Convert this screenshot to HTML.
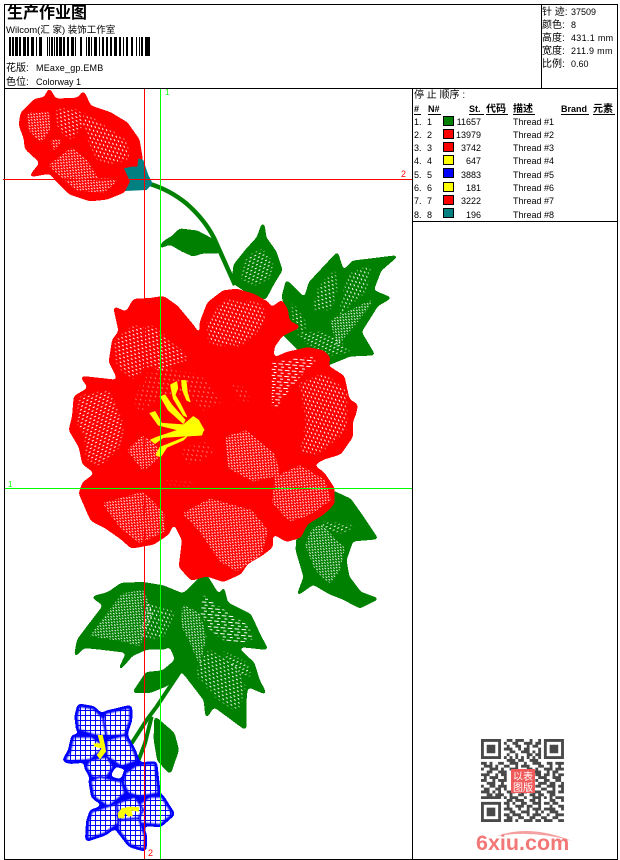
<!DOCTYPE html>
<html><head><meta charset="utf-8"><style>
html,body{margin:0;padding:0;background:#fff;width:620px;height:860px;overflow:hidden}
svg{display:block}
text{font-family:"Liberation Sans","WenQuanYi Zen Hei","Noto Sans CJK SC",sans-serif;font-size:9px;fill:#000}
.z{font-size:10px}
.b{font-weight:bold}
</style></head><body>
<svg width="620" height="860" viewBox="0 0 620 860" xmlns="http://www.w3.org/2000/svg">
<defs>
<pattern id="a" width="15" height="18" patternUnits="userSpaceOnUse" patternTransform="rotate(35)"><rect width="6" height="3" fill="#fff"/><rect x="7" y="9" width="6" height="3" fill="#fff"/></pattern>
<pattern id="b" width="15" height="18" patternUnits="userSpaceOnUse" patternTransform="rotate(65)"><rect width="6" height="3" fill="#fff"/><rect x="7" y="9" width="6" height="3" fill="#fff"/></pattern>
<pattern id="c" width="15" height="18" patternUnits="userSpaceOnUse" patternTransform="rotate(-25)"><rect width="6" height="3" fill="#fff"/><rect x="7" y="9" width="6" height="3" fill="#fff"/></pattern>
<pattern id="d" width="12" height="12" patternUnits="userSpaceOnUse" patternTransform="rotate(40)"><rect width="6" height="2.6" fill="#fff"/><rect x="5" y="6" width="6" height="2.6" fill="#fff"/></pattern>
<pattern id="e" width="21" height="18" patternUnits="userSpaceOnUse" patternTransform="rotate(5)"><rect width="14" height="3" fill="#fff"/><rect x="9" y="9" width="9" height="3" fill="#fff"/></pattern>
<pattern id="f" width="18" height="21" patternUnits="userSpaceOnUse" patternTransform="rotate(55)"><rect width="6" height="3" fill="#fff"/><rect x="9" y="10" width="6" height="3" fill="#fff"/></pattern>
<pattern id="l" width="15" height="15" patternUnits="userSpaceOnUse"><rect width="15" height="15" fill="#fff"/><path d="M0 1.5H15M1.5 0V15" stroke="#00f" stroke-width="3" fill="none"/></pattern>
<filter id="g" x="-10%" y="-10%" width="120%" height="120%"><feGaussianBlur stdDeviation="6.5"/><feComponentTransfer><feFuncA type="discrete" tableValues="0 1"/></feComponentTransfer></filter>
<filter id="g1" x="-10%" y="-10%" width="120%" height="120%"><feGaussianBlur stdDeviation="1.8"/><feComponentTransfer><feFuncA type="discrete" tableValues="0 1"/></feComponentTransfer></filter>
<filter id="h" x="-10%" y="-10%" width="120%" height="120%"><feGaussianBlur in="SourceAlpha" stdDeviation="9"/><feComponentTransfer result="m"><feFuncA type="linear" slope="20" intercept="-1.4"/></feComponentTransfer><feComposite in="SourceGraphic" in2="m" operator="in"/></filter>
<filter id="s" x="-10%" y="-10%" width="120%" height="120%"><feGaussianBlur stdDeviation="2"/></filter>
<filter id="q" x="-5%" y="-5%" width="110%" height="110%"><feGaussianBlur stdDeviation=".12"/></filter>
<g id="petals">
<polygon points="88,408 130,415 165,450 170,500 130,495 85,480 80,440"/>
<polygon points="165,430 240,412 240,450 225,495 170,500 160,450"/>
<polygon points="70,500 125,500 165,530 120,570 60,575 44,570 60,545"/>
<polygon points="170,510 225,495 250,540 262,572 215,590 170,560"/>
<polygon points="120,570 170,560 190,590 165,630 125,620 108,590"/>
<polygon points="122,632 150,620 215,635 225,670 175,710 130,680"/>
<polygon points="225,610 260,585 315,580 325,670 270,680 235,670 220,640"/>
<polygon points="300,680 335,680 368,732 330,765 270,760 255,710"/>
<polygon points="125,725 200,700 205,760 165,790 112,808 115,755"/>
<polygon points="205,750 265,740 285,800 283,838 240,825 205,780"/>
<polygon points="200,700 255,680 280,720 265,745 205,750"/>
</g>
<mask id="bm" maskUnits="userSpaceOnUse" x="0" y="380" width="420" height="480"><g filter="url(#s)" fill="#fff" stroke="#000" stroke-width="9"><use href="#petals"/></g></mask>
</defs>

<!-- stems and top leaves -->
<path d="M150 184Q170 190 187 204Q205 220 214 238L235 285" fill="none" stroke="#008000" stroke-width="4.5"/>
<g filter="url(#g1)" fill="#008000" stroke="#008000" stroke-width="3">
<polygon points="160,247 166,241 173,237 180,230 197,232 212,240 218,252 203,252 193,255 182,250 170,243"/>
<polygon points="263,224 265,238 275,252 281,270 273,283 265,298 250,293 233,282 235,265 247,250 258,238"/>
<polygon points="287,282 305,300 310,283 337,254 343,273 353,262 395,257 380,270 372,291 389,298 377,305 360,332 373,354 350,355 328,364 300,350 283,333 290,317 283,297"/>
<polygon points="333,492 350,500 362,517 376,538 352,540 345,560 348,577 360,593 376,599 360,607 343,598 330,593 313,583 299,593 305,577 297,550 298,537 313,510"/>
</g>
<g transform="scale(.3333)">
<g filter="url(#h)">
<polygon fill="url(#c)" points="735,771 789,741 825,789 816,834 771,861 720,840"/>
<polygon fill="url(#a)" points="951,861 1005,801 1020,849 999,930 930,939"/>
<polygon fill="url(#b)" points="1041,819 1119,789 1101,879 1011,951"/>
<polygon fill="url(#d)" points="990,960 1131,891 1071,969 1011,1041"/>
<polygon fill="url(#c)" points="870,999 969,990 1071,1059 981,1071"/>
<polygon fill="url(#a)" points="870,891 921,960 921,990 870,990"/>
<polygon fill="url(#d)" points="936,1584 966,1575 1035,1644 1020,1710 990,1755 945,1710 915,1635"/>
<polygon fill="url(#c)" points="960,1560 1080,1575 1035,1605 975,1590"/>
</g>
</g>

<!-- lower leaves -->
<g transform="translate(50,570) scale(.3333)">
<path d="M390 305L320 410L290 450L245 520" fill="none" stroke="#008000" stroke-width="12"/>
<path d="M305 440L285 520L262 580" fill="none" stroke="#008000" stroke-width="12"/>
<g filter="url(#g)" fill="#008000" stroke="#008000" stroke-width="8">
<polygon points="76,256 85,210 130,150 165,105 130,82 175,70 215,42 280,40 340,50 400,75 380,200 345,235 290,235 245,255 207,300 235,245 150,235 100,230"/>
<polygon points="465,12 510,85 520,56 530,100 600,135 630,200 650,236 550,225 610,280 625,330 645,369 590,345 585,400 586,476 510,420 490,405 470,440 465,390 400,305 345,300 380,270 350,200 400,75"/>
<polygon points="252,366 290,310 340,305 380,320 350,345 300,365"/>
<polygon points="316,444 370,490 383,540 360,608 325,570 315,510"/>
</g>
<g filter="url(#h)">
<polygon fill="url(#d)" points="110,210 170,130 215,70 280,60 310,130 270,230 220,215 130,200"/>
<polygon fill="url(#b)" points="290,100 380,120 350,200 300,215 270,190"/>
<polygon fill="url(#e)" points="455,70 510,110 600,170 610,215 530,220 480,180 450,130"/>
<polygon fill="url(#d)" points="395,100 450,130 470,200 450,290 420,220 395,170"/>
<polygon fill="url(#a)" points="430,310 480,230 560,290 590,350 570,430 510,400"/>
<polygon fill="url(#c)" points="500,230 600,280 610,340 560,300"/>
</g>
</g>

<!-- bud -->
<g transform="translate(0,85) scale(.3333)">
<g filter="url(#g)" fill="#f00" stroke="#f00" stroke-width="8">
<polygon points="93,272 125,232 105,215 78,190 75,160 60,120 65,85 105,45 135,40 148,14 165,45 235,42 250,22 270,65 330,85 380,115 415,165 425,225 420,250 385,295 370,320 320,340 270,345 210,325 170,285 150,262"/>
</g>
<g filter="url(#h)">
<polygon fill="url(#d)" points="78,82 152,78 150,135 125,175 85,135"/>
<polygon fill="url(#a)" points="162,65 245,72 245,130 215,175 170,130"/>
<polygon fill="url(#b)" points="250,75 385,165 395,225 340,240 285,225 250,130"/>
<polygon fill="url(#d)" points="145,240 215,187 265,230 295,280 360,282 310,325 225,315 175,272"/>
<polygon fill="url(#d)" points="150,160 190,165 160,205"/>
</g>
<polygon fill="#008080" points="372,250 395,245 412,245 415,220 430,225 445,270 458,295 440,315 375,318 390,290"/>
</g>

<!-- main flower -->
<g transform="translate(60,290) scale(.3333)">
<g filter="url(#g)" fill="#f00" stroke="#f00" stroke-width="8">
<polygon points="164,54 200,70 222,30 270,28 310,22 350,50 400,110 428,160 422,100 445,40 490,5 530,0 580,15 625,40 630,60 665,34 680,60 685,95 716,110 665,135 640,170 636,210 680,190 745,175 790,185 808,205 800,228 850,260 865,330 890,345 885,370 875,395 875,440 840,490 790,505 755,525 790,550 820,595 820,640 790,670 740,700 720,740 680,752 635,725 635,770 610,790 560,820 540,850 490,872 440,855 395,868 360,830 370,750 340,690 325,730 280,760 215,772 185,745 135,710 95,690 60,610 70,580 110,550 70,520 60,470 30,420 40,380 45,320 90,295 66,262 140,270 180,275 150,215 160,150 180,125"/>
</g>
<g filter="url(#h)">
<polygon fill="url(#a)" points="160,150 215,105 280,105 335,150 400,210 330,235 260,235 215,275 165,225"/>
<polygon fill="url(#b)" points="435,100 490,25 605,35 625,90 590,135 540,175 445,165"/>
<polygon fill="url(#b)" points="715,280 790,245 865,300 865,420 780,495 715,495 735,400"/>
<polygon fill="url(#e)" points="635,215 785,195 700,285 635,375"/>
<polygon fill="url(#c)" points="45,400 55,315 150,295 195,400 185,470 120,535 75,515 70,440"/>
<polygon fill="url(#d)" points="200,480 250,435 295,470 295,505 250,545"/>
<polygon fill="url(#f)" points="210,330 255,245 330,230 445,255 495,340 430,375 380,325 310,325 235,385"/>
<polygon fill="url(#d)" points="495,440 560,420 645,490 660,555 580,575 505,535"/>
<polygon fill="url(#d)" points="645,560 720,525 795,570 815,630 750,675 690,695 635,640"/>
<polygon fill="url(#d)" points="365,670 450,625 575,660 625,720 605,795 530,845 480,815 415,720"/>
<polygon fill="url(#d)" points="125,640 250,605 315,670 315,725 240,760 185,720"/>
<polygon fill="url(#f)" points="355,470 440,445 475,490 420,525 365,525"/>
<polygon fill="url(#f)" points="495,265 565,285 585,345 535,345"/>
<polygon fill="url(#f)" points="305,565 425,565 405,595 305,595"/>
</g>
</g>
<!-- stamens -->
<g transform="translate(130,360) scale(.3333)" fill="#ff0" stroke="#ff0" stroke-width="3" stroke-linejoin="round">
<polygon points="122,75 140,65 143,85 135,105 150,130 170,170 160,165 130,115"/>
<polygon points="155,62 168,62 172,100 180,125 170,120 158,90"/>
<polygon points="92,110 105,105 125,135 165,180 160,190 115,150"/>
<polygon points="60,160 75,155 95,190 165,195 165,215 85,195"/>
<polygon points="62,240 80,232 160,205 220,210 215,225 160,228 100,232 75,250"/>
<polygon points="78,285 90,262 170,230 160,240 110,262 92,290"/>
<polygon points="160,195 190,170 205,180 222,210 210,225 165,228"/>
</g>

<!-- blue flowers -->
<g transform="translate(50,570) scale(.3333)">
<g filter="url(#g)" fill="#00f" stroke="#00f" stroke-width="14" stroke-linejoin="round"><use href="#petals"/></g>
<rect x="0" y="380" width="420" height="480" fill="url(#l)" mask="url(#bm)"/>
<g fill="#ff0">
<polygon points="143,495 158,495 165,525 168,545 150,568 140,555 155,535 133,530 130,520 150,520"/>
<polygon points="203,730 215,715 240,710 268,712 266,725 245,722 248,738 235,740 225,730 222,745 205,745"/>
</g>
</g>

<!-- frame -->
<g shape-rendering="crispEdges" fill="none" stroke="#000">
<path d="M4.5 4.5H617.5V859.5H4.5Z M4 88.5H617.5 M541.5 4V88 M412.5 88V859 M412 221.5H617"/>
</g>

<!-- guide lines -->
<g shape-rendering="crispEdges" fill="none">
<path d="M144.5 89V859M3 179.5H412" stroke="#f00"/>
<path d="M160.5 89V859M5 488.5H412" stroke="#0f0"/>
</g>
<text x="165" y="95" style="font-size:8px;fill:#0f0">1</text>
<text x="8" y="487" style="font-size:8px;fill:#0f0">1</text>
<text x="401" y="177" style="font-size:9px;fill:#f00">2</text>
<text x="148" y="856" style="font-size:9px;fill:#f00">2</text>

<!-- header left -->
<text x="7" y="18" class="b" style="font-size:16px">生产作业图</text>
<text x="6" y="33" style="font-size:9.5px">Wilcom(汇 家) 装饰工作室</text>
<g transform="translate(0,36) scale(.3333)" shape-rendering="crispEdges">
<path d="M27 3h6v57h-6zM36 3h6v57h-6zM45 3h9v57h-9zM57 3h6v57h-6zM69 3h9v57h-9zM81 3h6v57h-6zM93 3h9v57h-9zM108 3h3v57h-3zM117 3h9v57h-9zM141 3h3v57h-3zM147 3h3v57h-3zM153 3h6v57h-6zM162 3h3v57h-3zM168 3h6v57h-6zM177 3h9v57h-9zM189 3h6v57h-6zM201 3h6v57h-6zM213 3h9v57h-9zM225 3h3v57h-3zM240 3h6v57h-6zM258 3h3v57h-3zM264 3h6v57h-6zM273 3h3v57h-3zM282 3h9v57h-9zM297 3h3v57h-3zM306 3h6v57h-6zM318 3h6v57h-6zM330 3h6v57h-6zM342 3h9v57h-9zM357 3h6v57h-6zM369 3h3v57h-3zM378 3h6v57h-6zM393 3h6v57h-6zM408 3h3v57h-3zM417 3h3v57h-3zM423 3h6v57h-6zM435 3h15v57h-15z"/>
</g>
<text x="6" y="71" class="z">花版:</text><text x="36" y="71" style="letter-spacing:.2px">MEaxe_gp.EMB</text>
<text x="6" y="85" class="z">色位:</text><text x="36" y="85">Colorway 1</text>

<!-- header right -->
<text x="542" y="15" class="z">针 迹:</text><text x="571" y="15">37509</text>
<text x="542" y="28" class="z">颜色:</text><text x="571" y="28">8</text>
<text x="542" y="41" class="z">高度:</text><text x="571" y="41" style="letter-spacing:.3px">431.1 mm</text>
<text x="542" y="54" class="z">宽度:</text><text x="571" y="54" style="letter-spacing:.3px">211.9 mm</text>
<text x="542" y="67" class="z">比例:</text><text x="571" y="67">0.60</text>

<!-- table -->
<text x="414" y="98" class="z">停 止 顺序 :</text>
<text x="414" y="112" class="b">#</text>
<text x="428" y="112" class="b">N#</text>
<text x="469" y="112" class="b">St.</text>
<text x="486" y="112" class="b z">代码</text>
<text x="513" y="112" class="b z">描述</text>
<text x="561" y="112" class="b">Brand</text>
<text x="593" y="112" class="b z">元素</text>
<path d="M414 114.5h7M428 114.5h13M469 114.5h15M486 114.5h22M513 114.5h22M561 114.5h28M593 114.5h22" stroke="#000" shape-rendering="crispEdges"/>
<g shape-rendering="crispEdges" stroke="#000">
<rect x="443.5" y="116.5" width="10" height="9" fill="#008000"/>
<rect x="443.5" y="129.5" width="10" height="9" fill="#f00"/>
<rect x="443.5" y="142.5" width="10" height="9" fill="#f00"/>
<rect x="443.5" y="155.5" width="10" height="9" fill="#ff0"/>
<rect x="443.5" y="168.5" width="10" height="9" fill="#00f"/>
<rect x="443.5" y="182.5" width="10" height="9" fill="#ff0"/>
<rect x="443.5" y="195.5" width="10" height="9" fill="#f00"/>
<rect x="443.5" y="208.5" width="10" height="9" fill="#008080"/>
</g>
<text x="414" y="125">1.</text><text x="427" y="125">1</text><text x="481" y="125" text-anchor="end">11657</text><text x="513" y="125">Thread #1</text>
<text x="414" y="138">2.</text><text x="427" y="138">2</text><text x="481" y="138" text-anchor="end">13979</text><text x="513" y="138">Thread #2</text>
<text x="414" y="151">3.</text><text x="427" y="151">3</text><text x="481" y="151" text-anchor="end">3742</text><text x="513" y="151">Thread #3</text>
<text x="414" y="164">4.</text><text x="427" y="164">4</text><text x="481" y="164" text-anchor="end">647</text><text x="513" y="164">Thread #4</text>
<text x="414" y="178">5.</text><text x="427" y="178">5</text><text x="481" y="178" text-anchor="end">3883</text><text x="513" y="178">Thread #5</text>
<text x="414" y="191">6.</text><text x="427" y="191">6</text><text x="481" y="191" text-anchor="end">181</text><text x="513" y="191">Thread #6</text>
<text x="414" y="204">7.</text><text x="427" y="204">7</text><text x="481" y="204" text-anchor="end">3222</text><text x="513" y="204">Thread #7</text>
<text x="414" y="218">8.</text><text x="427" y="218">8</text><text x="481" y="218" text-anchor="end">196</text><text x="513" y="218">Thread #8</text>

<!-- QR -->
<g transform="translate(481,739) scale(2.86)" fill="none" stroke="#4a4a4a" stroke-width="1" filter="url(#q)">
<path d="M0 .5h7M9 .5h2M12 .5h3M17 .5h1M20 .5h1M22 .5h7
M0 1.5h1M6 1.5h1M8 1.5h1M11 1.5h2M15 1.5h3M19 1.5h2M22 1.5h1M28 1.5h1
M0 2.5h1M2 2.5h3M6 2.5h1M9 2.5h1M12 2.5h2M16 2.5h1M18 2.5h2M22 2.5h1M24 2.5h3M28 2.5h1
M0 3.5h1M2 3.5h3M6 3.5h1M8 3.5h3M13 3.5h1M15 3.5h2M20 3.5h1M22 3.5h1M24 3.5h3M28 3.5h1
M0 4.5h1M2 4.5h3M6 4.5h1M10 4.5h2M14 4.5h3M18 4.5h1M20 4.5h1M22 4.5h1M24 4.5h3M28 4.5h1
M0 5.5h1M6 5.5h1M9 5.5h1M12 5.5h1M16 5.5h2M19 5.5h2M22 5.5h1M28 5.5h1
M0 6.5h7M8 6.5h1M10 6.5h1M12 6.5h1M14 6.5h1M16 6.5h1M18 6.5h1M20 6.5h1M22 6.5h7
M9 7.5h3M13 7.5h2M17 7.5h3
M0 8.5h2M3 8.5h1M6 8.5h2M10 8.5h3M15 8.5h1M18 8.5h3M23 8.5h2M26 8.5h3
M1 9.5h3M5 9.5h1M8 9.5h2M12 9.5h1M14 9.5h3M20 9.5h2M24 9.5h1M27 9.5h1
M0 10.5h1M3 10.5h3M7 10.5h1M10 10.5h3M16 10.5h2M19 10.5h1M22 10.5h3M26 10.5h3
M2 11.5h2M6 11.5h3M11 11.5h2M15 11.5h1M18 11.5h3M23 11.5h1M25 11.5h2
M0 12.5h3M5 12.5h1M7 12.5h2M19 12.5h2M22 12.5h2M25 12.5h1M27 12.5h2
M1 13.5h1M3 13.5h3M8 13.5h1M20 13.5h3M25 13.5h3
M0 14.5h2M4 14.5h1M6 14.5h3M19 14.5h1M22 14.5h2M26 14.5h2
M2 15.5h3M7 15.5h1M20 15.5h3M24 15.5h2M28 15.5h1
M0 16.5h1M3 16.5h2M6 16.5h3M19 16.5h2M23 16.5h3M27 16.5h2
M1 17.5h2M5 17.5h2M8 17.5h1M21 17.5h2M25 17.5h1M28 17.5h1
M0 18.5h3M4 18.5h1M6 18.5h1M9 18.5h3M14 18.5h2M18 18.5h3M23 18.5h3M27 18.5h2
M2 19.5h2M5 19.5h3M10 19.5h1M13 19.5h2M17 19.5h2M20 19.5h2M24 19.5h2
M0 20.5h7M8 20.5h1M10 20.5h3M15 20.5h1M18 20.5h3M22 20.5h1M24 20.5h1M26 20.5h3
M9 21.5h2M12 21.5h3M17 21.5h2M20 21.5h1M24 21.5h2M28 21.5h1
M0 22.5h7M8 22.5h2M11 22.5h1M14 22.5h2M18 22.5h3M22 22.5h2M25 22.5h2
M0 23.5h1M6 23.5h1M9 23.5h1M12 23.5h3M16 23.5h2M20 23.5h1M24 23.5h1M27 23.5h2
M0 24.5h1M2 24.5h3M6 24.5h1M8 24.5h3M13 24.5h1M16 24.5h1M18 24.5h3M22 24.5h4M28 24.5h1
M0 25.5h1M2 25.5h3M6 25.5h1M10 25.5h2M14 25.5h3M19 25.5h1M21 25.5h1M24 25.5h3
M0 26.5h1M2 26.5h3M6 26.5h1M8 26.5h2M11 26.5h3M16 26.5h1M18 26.5h3M23 26.5h1M26 26.5h3
M0 27.5h1M6 27.5h1M9 27.5h2M13 27.5h2M17 27.5h2M21 27.5h2M25 27.5h2
M0 28.5h7M8 28.5h3M12 28.5h1M15 28.5h3M19 28.5h2M22 28.5h3M27 28.5h2"/>
</g>
<rect x="511" y="769" width="24" height="24" fill="#f05a5a"/>
<text x="513" y="780" style="font-size:10px;fill:#fff">以</text><text x="523" y="780" style="font-size:10px;fill:#fff">表</text>
<text x="513" y="791" style="font-size:10px;fill:#fff">图</text><text x="523" y="791" style="font-size:10px;fill:#fff">版</text>

<!-- 6xiu.com logo -->
<path d="M497 836Q530 824 572 841Q535 830 497 836Z" fill="#f4a0a0"/>
<text x="476" y="850" style="font-size:21.5px;font-weight:bold;fill:#f27878">6xiu.com</text>
</svg>
</body></html>
